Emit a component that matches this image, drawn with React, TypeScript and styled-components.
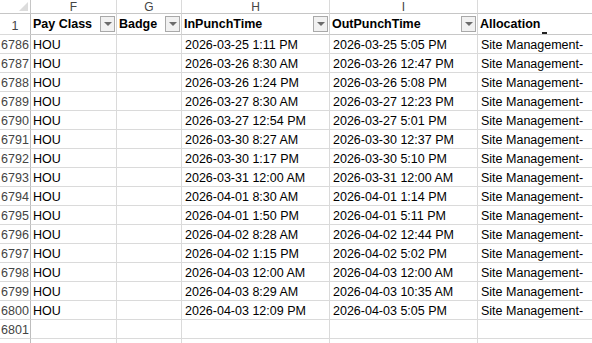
import React from "react";
import styled, { createGlobalStyle } from "styled-components";

const GlobalStyle = createGlobalStyle`
  html, body {
    margin: 0;
    padding: 0;
    background: #ffffff;
  }
  body {
    font-family: "Liberation Sans", Arial, sans-serif;
  }
`;

const Sheet = styled.div`
  width: 592px;
  height: 343px;
  overflow: hidden;
  background: #ffffff;
`;

const Grid = styled.div`
  display: grid;
  grid-template-columns: 31px 86px 65px 148px 148px 140px;
  grid-auto-rows: 19px;
  grid-template-rows: 14px 21px;
`;

const Corner = styled.div`
  position: relative;
  border-right: 1px solid #c6c6c6;
  border-bottom: 1px solid #c6c6c6;
  &::after {
    content: "";
    position: absolute;
    right: 2px;
    bottom: 2px;
    border-left: 9px solid transparent;
    border-bottom: 9px solid #dcdcdc;
  }
`;

const ColLetter = styled.div`
  display: flex;
  align-items: center;
  justify-content: center;
  font-size: 12px;
  color: #444444;
  border-right: 1px solid #dadada;
  border-bottom: 1px solid #c6c6c6;
  line-height: 1;
`;

const RowNum = styled.div`
  display: flex;
  align-items: flex-end;
  justify-content: center;
  padding-bottom: 2px;
  box-sizing: border-box;
  font-size: 12.5px;
  color: #444444;
  border-right: 1px solid #bdbdbd;
  border-bottom: 1px solid #dadada;
  line-height: 1;
`;

const HeadCell = styled.div`
  display: flex;
  align-items: center;
  justify-content: space-between;
  padding-left: 2px;
  padding-right: 1px;
  box-sizing: border-box;
  font-size: 12.5px;
  font-weight: 700;
  color: #000000;
  border-right: 1px solid #d4d4d4;
  border-bottom: 1px solid #c8c8c8;
  white-space: nowrap;
  overflow: hidden;
  position: relative;
`;

const FilterButton = styled.span`
  flex: none;
  width: 15px;
  height: 16px;
  box-sizing: border-box;
  border: 1px solid #a9a9a9;
  background: #f1f1f1;
  display: flex;
  align-items: center;
  justify-content: center;
  &::after {
    content: "";
    border-left: 4px solid transparent;
    border-right: 4px solid transparent;
    border-top: 4px solid #6b6b6b;
  }
`;

const Caret = styled.span`
  position: absolute;
  left: 64px;
  bottom: 0;
  width: 5px;
  height: 2px;
  background: #222222;
`;

const Cell = styled.div<{ $pad?: number }>`
  display: flex;
  align-items: flex-end;
  padding-left: ${(p) => p.$pad ?? 2}px;
  padding-bottom: 2px;
  box-sizing: border-box;
  font-size: 12.5px;
  color: #000000;
  border-right: 1px solid #dadada;
  border-bottom: 1px solid #dadada;
  white-space: nowrap;
  overflow: hidden;
  line-height: 1;
`;

type Punch = { inTime: string; outTime: string };

const punches: Punch[] = [
  { inTime: "2026-03-25 1:11 PM", outTime: "2026-03-25 5:05 PM" },
  { inTime: "2026-03-26 8:30 AM", outTime: "2026-03-26 12:47 PM" },
  { inTime: "2026-03-26 1:24 PM", outTime: "2026-03-26 5:08 PM" },
  { inTime: "2026-03-27 8:30 AM", outTime: "2026-03-27 12:23 PM" },
  { inTime: "2026-03-27 12:54 PM", outTime: "2026-03-27 5:01 PM" },
  { inTime: "2026-03-30 8:27 AM", outTime: "2026-03-30 12:37 PM" },
  { inTime: "2026-03-30 1:17 PM", outTime: "2026-03-30 5:10 PM" },
  { inTime: "2026-03-31 12:00 AM", outTime: "2026-03-31 12:00 AM" },
  { inTime: "2026-04-01 8:30 AM", outTime: "2026-04-01 1:14 PM" },
  { inTime: "2026-04-01 1:50 PM", outTime: "2026-04-01 5:11 PM" },
  { inTime: "2026-04-02 8:28 AM", outTime: "2026-04-02 12:44 PM" },
  { inTime: "2026-04-02 1:15 PM", outTime: "2026-04-02 5:02 PM" },
  { inTime: "2026-04-03 12:00 AM", outTime: "2026-04-03 12:00 AM" },
  { inTime: "2026-04-03 8:29 AM", outTime: "2026-04-03 10:35 AM" },
  { inTime: "2026-04-03 12:09 PM", outTime: "2026-04-03 5:05 PM" },
];

const columns = ["F", "G", "H", "I", ""];
const headers = ["Pay Class", "Badge", "InPunchTime", "OutPunchTime"];

export default function App() {
  return (
    <>
      <GlobalStyle />
      <Sheet>
        <Grid>
          <Corner />
          {columns.map((c, i) => (
            <ColLetter key={i}>{c}</ColLetter>
          ))}

          <RowNum>1</RowNum>
          {headers.map((h) => (
            <HeadCell key={h}>
              <span>{h}</span>
              <FilterButton />
            </HeadCell>
          ))}
          <HeadCell>
            <span>Allocation</span>
            <Caret />
          </HeadCell>

          {punches.map((p, i) => (
            <React.Fragment key={i}>
              <RowNum>{6786 + i}</RowNum>
              <Cell>HOU</Cell>
              <Cell />
              <Cell $pad={3}>{p.inTime}</Cell>
              <Cell $pad={3}>{p.outTime}</Cell>
              <Cell $pad={3}>Site Management-</Cell>
            </React.Fragment>
          ))}

          {[6801, 6802].map((n) => (
            <React.Fragment key={n}>
              <RowNum>{n === 6801 ? n : ""}</RowNum>
              <Cell />
              <Cell />
              <Cell />
              <Cell />
              <Cell />
            </React.Fragment>
          ))}
        </Grid>
      </Sheet>
    </>
  );
}
